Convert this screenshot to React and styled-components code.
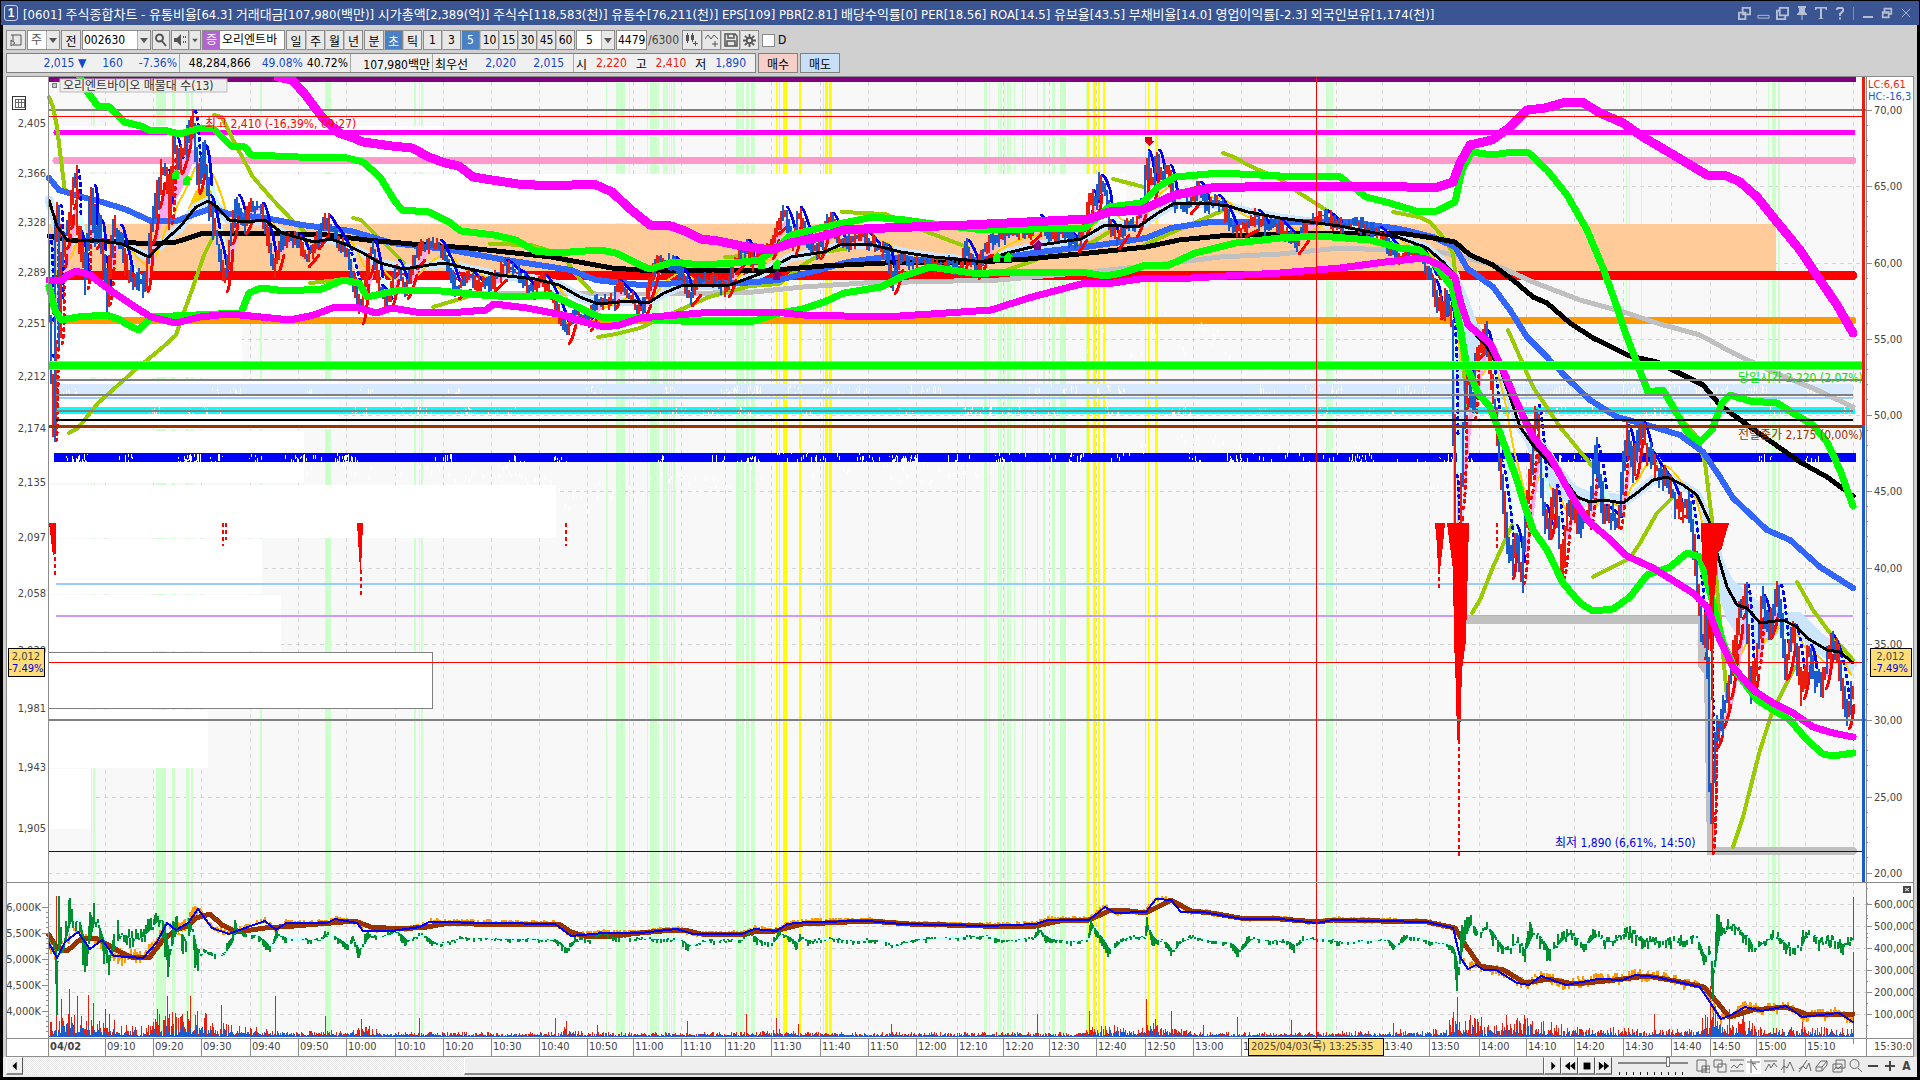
import React, { useState } from 'react';
import styled, { createGlobalStyle } from 'styled-components';

const GlobalStyle = createGlobalStyle`
    * {
        box-sizing: border-box;
    }

    body {
        margin: 0;
        background: #000;
    }

    body, button, input, select {
        font-family: "Liberation Sans Narrow", "DejaVu Sans Condensed", "Noto Sans CJK KR", sans-serif;
        font-size: 12px;
    }
`

const Screen = styled.div`
    min-height: 100vh;
    padding-top: 1px;
    display: flex;
    flex-direction: column;
`

const TitleBar = styled.header`
    height: 24px;
    margin: 0 1px;
    padding: 0 6px 0 3px;
    background: #3a5591;
    color: #fff;
    display: flex;
    align-items: center;
    justify-content: space-between;
`

const TitleText = styled.h1`
    display: flex;
    align-items: center;
    gap: 5px;
    margin: 0;
    font-size: 13px;
    font-weight: normal;
    white-space: pre;
`

const Badge = styled.span`
    width: 14px;
    height: 16px;
    border: 1px solid #c8d2e8;
    border-radius: 3px;
    font: bold 12px/14px "Liberation Sans", sans-serif;
    text-align: center;
`

const TitleIcons = styled.div`
    display: flex;
    align-items: center;
    gap: 4px;
`

const IconButton = styled.button`
    width: ${p => p.$w || 15}px;
    height: 16px;
    padding: 0;
    border: 0;
    background: ${p => p.$on ? '#fff' : 'none'};
    color: ${p => p.$color || '#b4bfd6'};
    display: flex;
    align-items: center;
    justify-content: center;
`

const TitleLine = styled.i`
    width: 1px;
    height: 13px;
    margin: 0 2px;
    background: #7d8fb8;
`

const Body = styled.main`
    flex: 1;
    margin: 0 3px 3px;
    padding: 5px 3px 0;
    background: #d0d0d0;
    display: flex;
    flex-direction: column;
`

const Toolbar = styled.div`
    height: 20px;
    display: flex;
    align-items: center;
    gap: 1px;
`

const Tool = styled.button`
    width: ${p => p.$w || 19}px;
    height: 20px;
    padding: 0;
    border: 1px solid #8c8c8c;
    border-left-color: ${p => p.$joined ? '#c0c0c0' : '#8c8c8c'};
    margin-left: ${p => p.$joined ? -1 : 0}px;
    background: ${p => p.$on ? '#4a80c4' : '#e8e8e8'};
    color: ${p => p.$on ? '#fff' : '#000'};
    display: flex;
    align-items: center;
    justify-content: center;

    svg {
        color: #555;
    }
`

const Combo = styled.label`
    width: ${p => p.$w}px;
    height: 20px;
    border: 1px solid #8c8c8c;
    background: #fff;
    display: flex;
    align-items: stretch;
`

const ComboSelect = styled.select`
    appearance: none;
    flex: 1;
    min-width: 0;
    padding: 0 3px;
    border: 0;
    background: transparent;
    color: ${p => p.$color || '#000'};
`

const ComboInput = styled.input`
    flex: 1;
    min-width: 0;
    padding: 0 0 0 1px;
    border: 0;
    background: transparent;
    text-align: ${p => p.$center ? 'center' : 'left'};
`

const Arrow = styled.span`
    width: 13px;
    border-left: 1px solid #b0b0b0;
    background: #e8e8e8;
    display: flex;
    align-items: center;
    justify-content: center;

    &::after {
        content: "";
        border: 4px solid transparent;
        border-top: 5px solid #555;
        border-bottom: 0;
    }
`

const Mark = styled.span`
    flex: none;
    width: 17px;
    height: 18px;
    background: #b565d0;
    color: #fff;
    line-height: 18px;
    text-align: center;
`

const StockName = styled.div`
    width: 83px;
    height: 20px;
    border: 1px solid #8c8c8c;
    background: #fff;
    display: flex;
    gap: 2px;
    overflow: hidden;
    line-height: 18px;
    white-space: nowrap;
`

const Check = styled.label`
    display: flex;
    align-items: center;
    gap: 3px;
    margin-left: 2px;

    input {
        appearance: none;
        width: 13px;
        height: 13px;
        margin: 0;
        border: 1px solid #888;
        background: #fff;
    }
`

const Muted = styled.span`
    width: 33px;
    color: #444;
`

const InfoRow = styled.div`
    height: 20px;
    margin: 3px 0;
    display: flex;
    gap: 2px;
`

const InfoBar = styled.div`
    width: 750px;
    border: 1px solid #808080;
    background: #f0f0f0;
    display: flex;
`

const InfoCell = styled.div`
    width: ${p => p.$w}px;
    padding: 0 2px;
    border-left: ${p => p.$first ? 0 : 1}px solid #a8a8a8;
    display: flex;
    align-items: center;
    justify-content: ${p => p.$spread ? 'space-between' : 'flex-end'};
    gap: ${p => p.$gap || 0}px;
    white-space: nowrap;
`

const Num = styled.span`
    color: ${p => p.$c || '#000'};
    margin-right: ${p => p.$push ? 'auto' : 0};
`

const Order = styled.button`
    width: 40px;
    padding: 0;
    border: 1px solid #808080;
    background: ${p => p.$bg};
`

const ChartFrame = styled.section`
    border: 1px solid #8c8c8c;
    background: #fff;
    line-height: 0;

    svg {
        display: block;
        width: 100%;
        height: auto;
    }
`

const Footer = styled.footer`
    flex: 1;
    min-height: 19px;
    margin: 0 -3px;
    padding: 0 3px 2px;
    background: #ececec;
    display: flex;
    align-items: stretch;
`

const ScrollTrack = styled.div`
    flex: 1;
    display: flex;
    background: repeating-conic-gradient(#fff 0 25%, #e4e4e4 0 50%) 0 0 / 2px 2px;
`

const ScrollThumb = styled.div`
    margin-left: 29%;
    flex: 1;
    border: 1px solid #fff;
    border-right-color: #666;
    border-bottom: 2px solid #888;
    background: #efefef;
`

const PlayButton = styled.button`
    width: 17px;
    padding: 0;
    border: 1px solid #fff;
    border-right-color: #555;
    border-bottom: 2px solid #888;
    background: #efefef;
    display: flex;
    align-items: center;
    justify-content: center;
`

const Speed = styled.div`
    width: 70px;
    margin: 0 7px 0 6px;
    display: flex;
    flex-direction: column;
    justify-content: space-between;

    input {
        appearance: none;
        width: 100%;
        height: 10px;
        margin: 0;
        background: linear-gradient(#888, #888) 0 5px / 100% 2px no-repeat;
    }

    input::-webkit-slider-thumb {
        appearance: none;
        width: 4px;
        height: 10px;
        border: 1px solid #777;
        background: #fff;
    }
`

const SpeedTicks = styled.div`
    height: 3px;
    margin: 0 1px;
    background: repeating-linear-gradient(90deg, #222 0 1px, transparent 1px 7px);
`

const FooterIcons = styled.div`
    display: flex;
    align-items: center;
    gap: 2px;
`

const Tiny = ({ d, fill, size = 14, w = 1 }) => (
    <svg width={size} height={size} viewBox="0 0 14 14" fill={fill ? 'currentColor' : 'none'} stroke={fill ? 'none' : 'currentColor'} strokeWidth={w} aria-hidden="true">
        <path d={d} />
    </svg>
)

// "x,y x,y" -> [[x, y], ...]
const pts = s => s.trim().split(/\s+/).map(p => p.split(',').map(Number));

// small seeded generator, keeps the bars the same on every render
const seeded = seed => () => {
    seed = (seed * 16807) % 2147483647;
    return seed / 2147483647;
}

const at = (line, x) => {
    if (x <= line[0][0]) return line[0][1];
    for (let i = 1; i < line.length; i++) {
        const [x0, y0] = line[i - 1];
        const [x1, y1] = line[i];
        if (x <= x1) return x1 === x0 ? y1 : y0 + (y1 - y0) * (x - x0) / (x1 - x0);
    }
    return line[line.length - 1][1];
}

const price = pts(`49,240 52,360 55,432 57,230 60,210 61,335 63,260 66,240 70,220 73,200 77,175 79,235 82,245 86,268 87,280 90,212 94,190 96,240 101,225 104,260 109,296
114,230 120,230 125,250 131,280 147,283 152,235 158,200 164,168 168,175 171,215 175,140 181,165 190,130 194,116 199,185 205,150 210,200 218,240 226,283 232,235 238,200 245,225 252,205 262,208 268,230 275,270 283,240 300,240 308,258 318,240 328,220 335,230 350,258 362,315 368,270
374,245 381,290 390,302 398,265 407,290 416,260 424,245 440,245 448,260 458,290 470,275 482,285 494,282 506,265 520,275 533,290 545,280 556,300 568,335 575,310 590,322 597,300 605,300 615,300 618,285 630,295 640,310
643,310 650,290 658,258 665,262 675,262 684,275 691,297 700,280 720,282 728,288 735,265 748,245 752,262 760,255 772,250 778,225 786,212 795,245 800,212 810,245 820,250 827,225 832,218 843,245 855,240 865,235 878,248 888,250 894,285 902,255 910,262 925,262 935,265 950,262 962,268 967,245 978,270 985,250 992,240 1005,235 1020,230 1030,235 1040,220 1050,235 1065,232 1078,243 1086,225 1092,195 1097,205 1101,180 1107,190 1111,225 1118,240 1128,220 1136,228 1145,200 1148,155 1154,190 1158,155 1163,175 1170,170 1176,205 1190,205 1200,187 1208,205 1218,200 1226,210 1235,230 1245,228 1258,215 1268,228 1280,225
1298,245 1310,222 1325,215 1340,225 1360,225 1380,232 1400,258 1420,250 1435,285 1440,310 1448,300 1453,325 1456,480 1458,650 1462,500 1466,400 1470,370 1474,410 1478,350 1487,335 1492,370 1498,430 1502,470 1512,570 1516,530 1523,575 1530,490 1538,410 1545,510 1550,530 1556,490 1563,570 1570,500 1580,520 1590,520 1597,450 1605,510 1620,520 1628,430 1635,470 1642,425 1650,455 1660,470 1668,480 1680,510 1690,500 1697,560 1704,650 1708,600 1712,845 1716,740 1722,720 1730,690 1737,640 1742,610 1747,590 1752,690 1758,660 1763,600 1770,630 1780,590 1787,670 1795,630 1803,690 1810,650 1815,675 1825,680 1832,640 1840,660 1848,720 1853,690`);

const magentaTop = '278,77 292,80 304,93 322,117 339,133 351,137 363,142 392,146 412,148 429,157 445,163 459,166 473,177 492,180 518,184 551,186 594,184 612,192 629,208 640,217 650,225 671,226 685,231 701,239 718,241 742,246 771,250 791,243 820,237 844,230 885,228 967,225 1007,223 1089,219 1109,212 1142,210 1175,195 1211,188 1280,186 1378,186 1435,188 1453,182 1460,163 1470,145 1492,140 1509,128 1527,110 1545,108 1566,102 1582,102 1600,113 1623,123 1643,137 1677,157 1707,175 1727,176 1740,182 1757,197 1777,222 1800,250 1820,280 1837,305 1853,333';
const magentaLow = '49,280 61,281 68,275 76,271 90,275 110,290 135,307 151,317 176,323 200,317 229,314 261,317 290,320 314,315 335,307 359,308 376,313 392,308 416,312 461,312 486,310 494,304 527,308 563,315 584,322 604,327 620,325 640,318 701,313 775,312 803,315 885,317 946,313 991,310 1032,297 1085,283 1113,283 1146,278 1191,278 1280,273 1340,268 1385,262 1423,258 1440,265 1455,277 1460,300 1468,325 1490,343 1503,370 1517,403 1533,437 1550,457 1563,480 1570,493 1587,520 1607,537 1627,556 1653,568 1693,593 1707,607 1720,640 1733,667 1753,690 1773,703 1793,713 1813,727 1833,733 1853,737';
const greenTop = '80,77 88,93 98,106 110,107 124,122 141,126 151,131 163,130 180,134 200,128 214,129 231,146 245,147 251,155 298,157 347,158 363,162 380,177 394,200 402,210 429,212 449,222 461,231 494,235 516,240 535,251 555,253 600,250 616,253 640,265 650,269 673,262 701,265 734,263 760,260 777,248 791,235 824,227 873,217 905,220 926,223 983,230 1085,228 1109,207 1142,203 1158,187 1175,177 1220,173 1280,176 1339,176 1366,197 1386,202 1419,212 1437,211 1455,202 1462,170 1472,152 1492,155 1513,152 1529,153 1547,170 1567,195 1587,230 1603,268 1617,307 1627,337 1637,363 1648,392 1663,390 1675,410 1687,432 1700,442 1712,430 1722,403 1730,395 1750,401 1777,403 1793,413 1813,425 1827,442 1840,470 1853,506';
const greenLow = '49,287 55,310 61,320 78,317 106,315 118,319 132,327 139,330 151,317 196,315 241,313 249,293 261,288 286,291 322,289 343,280 359,283 367,297 400,290 441,291 482,295 514,297 551,295 567,302 584,310 600,317 640,318 681,321 754,321 779,313 803,309 824,302 844,293 881,287 901,277 930,267 979,274 999,272 1081,272 1105,276 1122,273 1146,265 1167,266 1195,253 1236,243 1280,238 1320,236 1370,240 1400,248 1420,250 1437,267 1452,287 1460,327 1467,367 1478,393 1490,407 1500,433 1517,480 1523,500 1533,530 1547,550 1563,583 1580,603 1593,611 1613,609 1630,597 1647,575 1670,567 1687,553 1700,557 1713,603 1723,643 1737,673 1757,700 1790,720 1807,740 1823,754 1833,756 1853,753';
const blueMa = '49,178 59,190 82,197 102,202 127,210 151,221 176,221 212,208 229,214 265,218 302,225 351,231 392,243 445,249 506,260 571,270 596,280 640,285 681,283 742,283 779,280 811,272 848,262 885,257 918,260 958,262 999,258 1048,251 1093,246 1146,238 1171,228 1211,222 1280,222 1350,222 1400,229 1433,237 1455,247 1467,268 1493,287 1510,310 1527,337 1543,353 1567,378 1590,400 1617,417 1647,425 1680,435 1703,452 1720,477 1733,498 1767,530 1790,540 1820,567 1853,588';
const blackThick = '49,236 67,240 106,241 151,244 176,242 204,233 237,234 265,233 327,235 367,240 412,244 469,248 551,257 612,268 640,270 775,270 824,266 885,263 979,262 1028,259 1089,253 1146,247 1179,240 1220,236 1280,234 1400,233 1433,238 1455,242 1470,255 1493,265 1513,280 1533,297 1547,303 1570,323 1593,338 1630,356 1657,362 1683,375 1703,385 1720,405 1750,427 1773,443 1800,462 1827,477 1853,496';
const blackThin = '49,200 57,226 67,240 98,240 122,244 149,257 163,242 180,227 196,207 208,201 216,206 229,220 245,222 265,220 282,233 314,242 331,239 347,245 363,253 380,263 404,269 429,265 445,263 465,268 498,275 535,279 559,285 580,297 598,304 629,301 648,303 664,293 681,286 730,285 762,273 791,257 824,252 840,245 869,244 901,252 934,257 967,260 983,262 1007,253 1040,245 1081,239 1105,225 1138,227 1158,213 1173,204 1203,203 1228,206 1248,212 1280,218 1340,226 1400,238 1427,248 1443,262 1455,275 1467,325 1487,347 1500,368 1510,397 1520,427 1533,445 1567,483 1577,497 1590,502 1603,500 1623,503 1637,493 1653,480 1667,477 1683,485 1697,495 1710,523 1717,553 1727,587 1737,605 1747,608 1760,623 1783,620 1797,627 1807,638 1827,650 1840,652 1853,663';
const grayMa = '461,293 596,294 673,294 754,292 803,287 864,283 999,280 1109,270 1171,263 1220,257 1280,254 1340,248 1440,252 1467,258 1500,267 1533,282 1580,300 1627,313 1660,324 1700,335 1733,353 1773,372 1817,390 1853,407';

const olive = [
    '49,97 53,107 57,127 61,160 65,192', '214,115 222,117 233,140 253,177 273,200 292,220 306,233', '69,433 78,428 98,403 135,370 163,347 176,335 180,323 192,290 204,255 214,235',
    '353,218 361,220 384,243 404,263', '310,283 339,280', '433,307 473,295', '490,244 531,245 563,255 576,275 592,292', '598,337 616,334 640,328 673,313 709,297 750,286 779,284 803,265 824,252 850,248',
    '842,212 885,214 922,230 967,247', '725,257 745,256', '1007,270 1073,247 1093,242 1109,232', '1113,179 1144,187', '1144,245 1171,233 1224,210', '1223,153 1234,157 1252,167 1280,179 1298,192 1329,212',
    '1393,212 1419,217 1430,222 1443,237 1453,253 1458,300 1462,345 1467,410', '1508,330 1533,387 1560,427 1593,467', '1472,613 1480,600 1493,567 1512,525', '1593,577 1630,558 1640,543 1657,513 1673,497',
    '1682,420 1697,437 1705,463 1712,520 1717,587 1727,697', '1797,582 1813,610 1833,637 1853,660', '1733,847 1743,817 1760,750 1773,710 1795,667',
];

const levels = [
    [56, 1853, 160, '#ff99cc', 7], [56, 1853, 132, '#ff00ff', 5], [54, 1853, 275, '#ff0000', 9], [52, 1853, 320, '#ff9900', 7],
];

const bands = [
    [156, 10], [172, 3], [186, 3], [191, 2], [91, 1], [93, 2], [260, 2], [325, 6], [414, 2], [419, 1], [421, 2], [606, 1], [616, 3], [620, 5], [629, 1],
    [647, 1], [650, 2], [652, 5], [658, 1], [663, 2], [666, 2], [669, 1], [671, 1], [673, 2], [736, 3], [740, 1], [742, 2], [746, 3], [751, 4], [965, 1], [984, 3], [989, 1], [998, 1], [1000, 2], [1004, 1], [1007, 2], [1010, 1], [1014, 1], [1022, 1], [1025, 1],
    [1037, 1], [1043, 2], [1052, 3], [1060, 6], [1086, 1], [1326, 3], [1330, 1], [1332, 1], [1626, 1], [1629, 1], [1641, 1], [1768, 1], [1772, 4], [1778, 2],
];
const yellowBands = [[776, 1], [779, 1], [783, 2], [786, 1], [799, 2], [823, 1], [825, 3], [829, 3], [1087, 2], [1093, 3], [1098, 2], [1103, 2], [1145, 1], [1148, 1], [1155, 3]];

// volume by price, newest block is outlined
const profile = [[126, 46, 443], [174, 49, 1126], [273, 48, 640], [324, 53, 242], [379, 50, 339], [431, 52, 304], [485, 53, 556], [539, 55, 262], [595, 56, 281], [710, 58, 208], [769, 60, 91]];

const hours = [[105, '09:10'], [153, '09:20'], [201, '09:30'], [250, '09:40'], [298, '09:50'], [346, '10:00'], [395, '10:10'], [443, '10:20'], [491, '10:30'], [539, '10:40'], [587, '10:50'], [633, '11:00'], [681, '11:10'], [725, '11:20'], [771, '11:30'], [820, '11:40'], [868, '11:50'], [916, '12:00'], [957, '12:10'], [1003, '12:20'], [1049, '12:30'], [1096, '12:40'], [1145, '12:50'], [1193, '13:00'], [1241, '13:10'], [1289, '13:20'], [1336, '13:30'], [1382, '13:40'], [1429, '13:50'], [1479, '14:00'], [1526, '14:10'], [1574, '14:20'], [1623, '14:30'], [1671, '14:40'], [1710, '14:50'], [1756, '15:00'], [1805, '15:10']];
const leftScale = [[122, '2,405'], [172, '2,366'], [221, '2,328'], [271, '2,289'], [322, '2,251'], [375, '2,212'], [427, '2,174'], [481, '2,135'], [536, '2,097'], [592, '2,058'], [649, '2,020'], [707, '1,981'], [766, '1,943'], [827, '1,905']];
const rightScale = [[110, '70,00'], [186, '65,00'], [263, '60,00'], [339, '55,00'], [415, '50,00'], [491, '45,00'], [568, '40,00'], [644, '35,00'], [720, '30,00'], [797, '25,00'], [873, '20,00']];
const subLeft = [[907, '6,000K'], [933, '5,500K'], [959, '5,000K'], [985, '4,500K'], [1011, '4,000K']];
const subRight = [[904, '600,000'], [926, '500,000'], [948, '400,000'], [970, '300,000'], [992, '200,000'], [1014, '100,000']];

const brownObv = '49,935 57,948 67,951 82,938 96,938 110,946 122,953 131,957 149,958 163,940 176,930 188,926 196,918 210,914 222,925 237,932 265,928 294,926 355,921 371,927 400,929 427,927 449,923 498,925 559,924 571,932 588,937 612,936 640,933 673,930 685,930 701,934 742,935 758,931 775,931 803,924 869,921 909,924 983,926 1036,926 1064,920 1089,920 1109,911 1122,910 1146,913 1171,900 1191,911 1211,913 1240,918 1280,919 1317,922 1333,920 1427,922 1455,928 1464,943 1480,966 1504,970 1525,983 1549,979 1574,984 1615,980 1647,976 1676,981 1704,987 1717,1002 1729,1017 1753,1010 1786,1007 1806,1014 1853,1014';
const blueObv = '49,943 57,958 65,942 78,932 90,949 102,940 114,956 143,958 157,942 167,923 176,930 188,923 198,909 212,928 229,934 245,928 265,921 276,930 286,923 327,923 335,919 357,923 363,931 392,931 420,927 429,922 555,924 571,936 604,933 640,933 677,929 693,934 742,934 754,929 777,931 787,924 807,922 869,921 901,924 987,926 1036,924 1048,920 1089,920 1105,907 1115,913 1146,912 1156,899 1171,900 1181,912 1203,912 1242,919 1280,919 1317,923 1333,920 1427,922 1453,928 1460,957 1468,969 1476,965 1484,970 1496,970 1517,983 1529,985 1541,976 1566,985 1598,979 1623,980 1635,975 1656,977 1700,987 1713,1007 1721,1019 1731,1015 1745,1007 1762,1011 1786,1006 1802,1017 1839,1013 1853,1022';
// green oscillator: centre line with its larger swings
const swing = pts('49,940 55,945 57,1015 59,905 62,955 66,925 70,905 74,928 78,912 82,950 86,965 90,920 94,908 100,940 108,968 114,940 119,928 128,940 140,938 150,925 158,915 163,925 168,975 172,935 176,918 180,935 186,950 190,912 196,968 203,950 215,955 222,955 232,935 235,922 242,935 255,935 270,950 276,930 285,940 320,940 326,932 348,948 353,935 358,958 366,932 380,938 395,930 405,943 420,933 433,945 445,943 460,938 555,940 566,952 574,938 590,940 600,932 612,938 680,940 688,948 700,941 742,940 747,930 757,942 772,944 778,930 790,940 797,947 800,934 808,942 830,938 845,941 880,940 892,948 905,940 985,936 1000,941 1034,938 1039,926 1045,940 1075,942 1088,938 1091,915 1096,935 1103,945 1108,955 1118,940 1128,936 1145,938 1147,915 1152,945 1162,940 1172,955 1178,940 1190,936 1205,941 1230,943 1238,955 1248,936 1265,942 1285,940 1294,949 1302,938 1330,940 1340,943 1387,939 1393,950 1405,935 1430,943 1446,944 1453,950 1458,990 1461,930 1470,915 1476,938 1486,925 1497,945 1505,955 1515,938 1525,955 1530,927 1537,935 1548,955 1560,938 1568,932 1582,948 1595,933 1605,945 1625,930 1645,943 1662,940 1680,942 1695,935 1703,965 1710,950 1713,1000 1717,912 1722,930 1730,922 1740,935 1748,940 1752,955 1762,940 1775,935 1786,949 1800,948 1805,928 1820,945 1828,938 1845,948 1851,935 1853,940');
// bar height above which the volume stays, by x
const volumeBase = pts('49,20 60,26 90,24 120,14 150,12 160,24 200,26 220,16 250,9 285,8 300,5 350,7 365,12 380,5 550,4 570,12 585,4 740,4 780,7 800,4 1080,4 1090,14 1110,14 1130,7 1143,8 1150,22 1165,10 1190,6 1280,3 1440,8 1452,20 1460,32 1475,22 1500,14 1520,22 1560,12 1600,6 1620,11 1650,7 1695,8 1703,22 1712,36 1725,14 1745,18 1760,10 1853,9');
const spikes = { 56: 141, 61: 38, 69: 48, 77: 41, 88: 42, 93: 34, 105: 28, 109: 23, 157: 28, 167: 41, 190: 41, 221: 32, 275: 41, 325: 21, 361: 18, 419: 19, 555: 19, 566: 16, 597: 12, 687: 16, 746: 23, 776: 19, 798: 13, 891: 13, 1037: 23, 1089: 26, 1146: 38, 1171: 26, 1203: 12, 1237: 20, 1291: 17, 1393: 14, 1453: 25, 1457: 40, 1506: 22, 1654: 23, 1710: 51, 1729: 28, 1743: 22, 1802: 18, 1853: 85 };

const buildCandles = () => {
    const rand = seeded(77);
    let red = '';
    let blue = '';
    for (let x = 49; x < 1854; x += 2) {
        const y0 = at(price, x);
        const y1 = at(price, x + 2);
        const calm = x > 215 && x < 1430 ? 1 : 1.7;
        const top = Math.round(Math.min(y0, y1) - rand() * 9 * calm);
        const bottom = Math.round(Math.max(y0, y1) + rand() * 11 * calm);
        const seg = `M${x} ${top}V${bottom}`;
        if (rand() < (y1 < y0 ? 0.62 : 0.36)) red += seg;
        else blue += seg;
    }
    return { red, blue };
}

// trailing stops: over the price while it falls, under it while it rises
// gentle moves are a solid stroke, steep ones break up into dots
const buildTrail = () => {
    const out = { red: '', redDots: '', blue: '', blueDots: '' };
    for (let i = 1; i < price.length; i++) {
        const [x0, y0] = price[i - 1];
        const [x1, y1] = price[i];
        const move = Math.abs(y1 - y0);
        if (move < 9) continue;
        const dots = move > 50 ? 'Dots' : '';
        if (y1 > y0) out['blue' + dots] += `M${x0 + 1} ${y0 - 5}Q${x0 + 4} ${y0 - 5} ${x1 + 2} ${y0 + (y1 - y0) * 0.7}`;
        else out['red' + dots] += `M${x0 + 1} ${y0 + 9}Q${x0 + 4} ${y0 + 6} ${x1 + 1} ${y1 + 15}`;
    }
    return out;
}

const buildCloud = () => {
    let avg = at(price, 49);
    let slow = avg;
    let pink = '';
    let cyan = '';
    let yellow = 'M49 ' + avg;
    for (let x = 50; x < 1853; x++) {
        const y = at(price, x);
        const next = avg + (y - avg) * 0.16;
        const seg = `M${x - 1} ${avg.toFixed(1)}L${x} ${next.toFixed(1)}`;
        if (next < avg) pink += seg;
        else cyan += seg;
        avg = next;
        slow += (y - slow) * 0.045;
        yellow += `L${x} ${slow.toFixed(1)}`;
    }
    return { pink, cyan, yellow };
}

const buildSpecks = () => {
    const rand = seeded(411);
    let d = '';
    const rows = [[454, 8], [385, 9], [407, 7]];
    rows.forEach(([top, h]) => {
        for (let c = 0; c < 46; c++) {
            const cx = 60 + rand() * 1780;
            for (let i = 0; i < 7; i++) {
                const x = Math.round(cx + rand() * 16);
                const y = Math.round(top + rand() * h);
                d += `M${x} ${y}v${Math.round(1 + rand() * (top + h - y))}`;
            }
        }
    });
    // faint echoes of the price below the levels
    for (let x = 245; x < 1453; x += 2) {
        const y = at(price, x);
        if (rand() < 0.45) d += `M${x} ${Math.round(430 + (y - 200) * 0.5 + rand() * 20)}v4`;
        if (rand() < 0.3 && y < 235) d += `M${x} ${Math.round(y + 128 + rand() * 26)}v4`;
    }
    return d;
}

const buildVolume = () => {
    const rand = seeded(9);
    let red = '';
    let blue = '';
    for (let x = 49; x < 1854; x++) {
        const base = at(volumeBase, x);
        const r = Math.round(1 + base * Math.pow(rand(), 1.8));
        red += `M${x} 1037v-${spikes[x] || r}`;
        blue += `M${x} 1037v-${Math.round(1 + base * 0.5 * Math.pow(rand(), 2))}`;
    }
    return { red, blue };
}

const buildSwing = () => {
    const rand = seeded(52);
    let green = '';
    let orange = '';
    let smooth = 'M49 940';
    let avg = 940;
    const line = pts(blueObv);
    for (let x = 49; x < 1853; x++) {
        const wild = x < 200 ? 12 : x > 1453 ? 8 : 3;
        const y = at(swing, x);
        avg += (y - avg) * 0.18;
        smooth += `L${x} ${avg.toFixed(1)}`;
        if (rand() < (Math.abs(y - avg) > 2 ? 0.9 : 0.5)) green += `M${x} ${avg.toFixed(0)}L${x} ${(y + (rand() - 0.5) * wild * 2 + 1).toFixed(0)}`;
        const o = at(line, x);
        if (rand() < 0.5) orange += `M${x} ${(o - rand() * wild * 0.6 - 2).toFixed(0)}v${(3 + rand() * wild * 0.8).toFixed(0)}`;
    }
    return { green, orange, smooth };
}

const candles = buildCandles();
const trail = buildTrail();
const cloud = buildCloud();
const specks = buildSpecks();
const volume = buildVolume();
const osc = buildSwing();

const Line = ({ points, color, w }) => (
    <polyline points={points} fill="none" stroke={color} strokeWidth={w} strokeLinecap="round" strokeLinejoin="round" />
)

const Rule = ({ x1 = 48, x2 = 1862, y, h = 1, color }) => <rect x={x1} y={y} width={x2 - x1} height={h} fill={color} />

const Pointer = ({ x, y, color, down }) => (
    <path d={down ? `M${x - 3} ${y - 4}h7v4h2l-5 5l-5 -5h1z` : `M${x - 3} ${y + 5}h7v-5h2l-5 -5l-5 5h1z`} fill={color} />
)

const Grid = () => (
    <g stroke="#d3d3d3" strokeDasharray="4 4">
        {hours.map(([x]) => <path key={x} d={`M${x}.5 82V1038`} />)}
        <path d="M1853.5 82V1038" />
        {rightScale.map(([y]) => <path key={y} d={`M48 ${y}.5H1862`} />)}
        {subRight.map(([y]) => <path key={y} d={`M48 ${y}.5H1866`} />)}
    </g>
)

const PricePane = () => (
    <g>
        {profile.map(([y, h, x]) => <rect key={y} x="48" y={y} width={x - 48} height={h} fill="#fff" />)}
        <rect x="48" y="224" width="1728" height="47" fill="#ffcc99" />
        <rect x="48.5" y="652.5" width="384" height="56" fill="#fff" stroke="#808080" />
        {levels.map(([x1, x2, y, c, w]) => <path key={y} d={`M${x1} ${y}.5H${x2}`} stroke={c} strokeWidth={w} strokeLinecap="round" />)}
        <Rule y={77} x2={1856} h={5} color="#800080" />
        <Rule y={109} x2={1866} h={2} color="#808080" />
        <Rule y={384} x1={56} x2={1853} h={11} color="#d6e9ff" />
        <Rule y={397} x1={56} x2={1853} h={2} color="#99ccff" />
        <Rule y={407} x1={56} x2={1855} h={7} color="#00ffff" />
        <Rule y={453} x1={54} x2={1856} h={9} color="#0000ff" />
        <path d={specks} stroke="#fff" strokeWidth="1" />
        <Rule y={583} x1={56} x2={1853} h={2} color="#99ccff" />
        <Rule y={615} x1={56} x2={1853} h={2} color="#cc99ff" />
        <path d="M1454 370V604M1458 370L1459 600" stroke="#c0c0c0" strokeWidth="3" />
        <path d="M1468 620H1702V665L1708 672L1711 851H1853" fill="none" stroke="#c0c0c0" strokeWidth="8" strokeLinecap="round" />
        <path d="M1458 275L1465 290L1478 325L1493 340L1505 365L1515 410L1527 430L1545 440L1560 465L1575 485L1590 492L1625 494V504L1590 507L1570 505L1550 490L1530 455L1510 400L1490 360L1470 380L1464 520L1459 600Z" fill="#cce5ff" />
        <path d="M1697 488L1712 530L1717 548L1733 580L1757 600L1780 612L1800 612L1820 632L1853 655V675L1815 652L1797 635L1783 630L1760 650L1740 640L1727 620L1717 590Z" fill="#cce5ff" />
        <path d="M174 237L184 218L196 190L206 186L214 194L226 214L214 206L200 204L184 226Z" fill="#ffcc00" />
        <path d="M159 225L166 190L174 175L190 150L197 150L186 182L176 200L168 216Z" fill="#ffaaee" />
        <Line points={grayMa} color="#c0c0c0" w={5} />
        <Line points={blackThin} color="#cce5ff" w={9} />
        <path d={cloud.yellow} fill="none" stroke="#ffcc00" strokeWidth="2" />
        <path d={cloud.pink} stroke="#ffaaee" strokeWidth="4" />
        <path d={cloud.cyan} stroke="#ccffff" strokeWidth="4" />
        {olive.map(p => <Line key={p} points={p} color="#99cc00" w={4} />)}
        <Line points={blueMa} color="#3366ff" w={6} />
        <Line points={blackThick} color="#000" w={5} />
        <g fill="none" strokeWidth="3" strokeLinecap="round">
            <path d={trail.blue} stroke="#0000ff" />
            <path d={trail.red} stroke="#ff0000" />
            <path d={trail.blueDots} stroke="#0000ff" strokeDasharray="2 5" />
            <path d={trail.redDots} stroke="#ff0000" strokeDasharray="2 5" />
        </g>
        <path d={candles.blue} stroke="#1a5ccc" strokeWidth="2" />
        <path d={candles.red} stroke="#e81e0e" strokeWidth="2" />
        <Line points={blackThin} color="#000" w={3} />
        <Line points={greenTop} color="#00ff00" w={7} />
        <Line points={greenLow} color="#00ff00" w={7} />
        <g fill="#ff0000">
            <path d="M1435 523H1445L1443 545L1440 570H1438L1437 545Z" />
            <path d="M1447 523H1469L1467 600L1466 640L1462 670L1460 740H1457L1456 690L1454 640L1453 570Z" />
            <path d="M1701 523H1729L1724 540L1722 548L1718 552L1717 570L1714 600L1713 700H1711L1710 600L1707 570L1702 560Z" />
            <path d="M49 523H56V550L53 556Z" />
            <path d="M357 523H363L361 570H360Z" />
        </g>
        <path d="M1458.5 740V858M1439 570V590M54.5 550V578M360.5 570V597M223 523V546M226 523V540M565.5 523V546M1496.5 523V550M1718 720L1715 830" stroke="#ff0000" strokeWidth="2" strokeDasharray="4 3" />
        <path d="M56.5 340V432M1712.5 600V851" stroke="#e81e0e" />
        <Line points={magentaTop} color="#ff00ff" w={9} />
        <Line points={magentaLow} color="#ff00ff" w={7} />
        <Rule y={361} h={9} color="#c0c0c0" />
        <Rule y={362} h={7} color="#00ff00" />
        <Rule y={379} x1={56} x2={1862} h={2} color="#808080" />
        <Rule y={394} x1={56} x2={1853} h={2} color="#808080" />
        <Rule y={410} x1={56} x2={1853} h={2} color="#808080" />
        <Rule y={419} x1={56} x2={1853} h={2} color="#000" />
        <Rule y={425} h={3} color="#993300" />
        <Rule y={116} color="#ff0000" />
        <Rule y={719} x2={1866} h={2} color="#808080" />
        <Rule y={851} color="#0000d8" />
        <Pointer x={1148} y={141} color="#d8001e" down />
        <Pointer x={175} y={174} color="#00ff00" />
        <Pointer x={186} y={180} color="#00ff00" />
        <Pointer x={761} y={264} color="#00ff00" />
        <Pointer x={776} y={264} color="#00ff00" />
        <Pointer x={996} y={257} color="#00ff00" />
        <Pointer x={1007} y={257} color="#00ff00" />
        <Pointer x={776} y={275} color="#800080" />
        <Pointer x={1037} y={245} color="#800080" />
    </g>
)

const VolumePane = () => (
    <g fill="none">
        <path d={volume.red} stroke="#e81e0e" strokeWidth="1" transform="translate(.5 0)" />
        <path d={volume.blue} stroke="#1a5ccc" strokeWidth="1" transform="translate(.5 0)" />
        <path d={osc.orange} stroke="#ff9900" strokeWidth="2" />
        <path d={osc.smooth} stroke="#ccffff" strokeWidth="3" />
        <Line points={brownObv} color="#993300" w={5} />
        <path d={osc.green} stroke="#009030" strokeWidth="2" />
        <Line points={blueObv} color="#0000ff" w={2} />
        <path d="M1853.5 897V940" stroke="#009030" />
    </g>
)

const PriceTag = ({ x, w }) => (
    <g textAnchor="middle">
        <rect x={x + 0.5} y="648.5" width={w} height="28" fill="#ffdd77" stroke="#000" />
        <text x={x + w / 2} y="660" fill="#444">2,012</text>
        <text x={x + w / 2} y="672" fill="#0000e0">-7.49%</text>
    </g>
)

const Chart = () => (
    <svg viewBox="7 77 1906 979" fontFamily='"Liberation Sans Narrow", "DejaVu Sans Condensed", "Noto Sans CJK KR", sans-serif' fontSize="11" fill="#444" role="img" aria-label="오리엔트바이오 차트">
        <g shapeRendering="crispEdges">
            <rect x="48" y="77" width="1818" height="961" fill="#f8f8f8" />
            <Grid />
            {bands.map(([x, w]) => <rect key={x} x={x} y="82" width={w} height="956" fill="#ccffcc" />)}
            {yellowBands.map(([x, w]) => <rect key={x} x={x} y="82" width={w} height="956" fill="#ffff00" />)}
            <PricePane />
            <VolumePane />
            <Rule y={662} color="#ff0000" />
            <rect x="1316" y="77" width="1" height="961" fill="#ff0000" />
            <rect x="1862" y="77" width="3" height="349" fill="#e81e0e" />
            <rect x="1862" y="426" width="3" height="456" fill="#1a5ccc" />
            <g stroke="#8c8c8c">
                <path d="M48.5 77V1056M1866.5 77V1056M7 882.5H1913M7 1038.5H1913" />
                {hours.map(([x]) => <path key={x} d={`M${x}.5 1038V1056`} />)}
                <path d="M1853.5 1038V1044" />
                {rightScale.map(([y]) => <path key={y} d={`M1866 ${y}.5h6m-6 15h2m-2 15h2m-2 15h2m-2 15h2`} />)}
                {subRight.map(([y]) => <path key={y} d={`M1866 ${y}.5h6m-6 11h2`} />)}
                {subLeft.map(([y]) => <path key={y} d={`M48 ${y}.5h-6m6 5h-2m2 5h-2m2 5h-2m2 5h-2`} />)}
            </g>
        </g>
        <g textAnchor="end">
            {leftScale.map(([y, t]) => <text key={t} x="46" y={y + 5}>{t}</text>)}
            {subLeft.map(([y, t]) => <text key={t} x="41" y={y + 4}>{t}</text>)}
        </g>
        {rightScale.map(([y, t]) => <text key={t} x="1874" y={y + 4}>{t}</text>)}
        {subRight.map(([y, t]) => <text key={t} x="1874" y={y + 4}>{t}</text>)}
        {hours.filter(([x]) => x < 1241 || x > 1336).map(([x, t]) => <text key={t} x={x + 2} y="1050">{t}</text>)}
        <text x="50" y="1050" fontWeight="bold">04/02</text>
        <text x="1243" y="1050">1</text>
        <text x="1874" y="1050">15:30:0</text>
        <rect x="1248.5" y="1038.5" width="135" height="17" fill="#ffdd77" stroke="#000" />
        <text x="1251" y="1050">2025/04/03(목) 13:25:35</text>
        <text x="1868" y="88" fill="#e81e0e">LC:6,61</text>
        <text x="1868" y="100" fill="#1a5ccc">HC:-16,3</text>
        <g fontSize="12">
            <text x="205" y="128" fill="#ff0000">최고 2,410 (-16,39%, 09:27)</text>
            <text x="1738" y="382" fill="#00e000">당일시가 2,220 (2,07%)</text>
            <text x="1738" y="439" fill="#993300">전일종가 2,175 (0,00%)</text>
            <text x="1555" y="847" fill="#0000e0">최저 1,890 (6,61%, 14:50)</text>
        </g>
        <PriceTag x={8} w={36} />
        <PriceTag x={1870} w={41} />
        <rect x="52.5" y="83.5" width="4" height="4" fill="#ccc" stroke="#777" />
        <rect x="60" y="79" width="167" height="13" fill="#eee" stroke="#bbb" />
        <text x="63" y="90" fill="#333" fontSize="12">오리엔트바이오 매물대 수(13)</text>
        <g fill="#fff" stroke="#333" shapeRendering="crispEdges">
            <rect x="12.5" y="96.5" width="13" height="13" />
            <path d="M15 99h9v8h-9zM15 102h9M18 99v8M21 99v8" stroke="#666" />
        </g>
        <rect x="1903" y="886" width="8" height="7" fill="#444" />
        <path d="M1905 888l4 3m0 -3l-4 3" stroke="#fff" />
    </svg>
)

const periods = ['일', '주', '월', '년'];
const units = ['분', '초', '틱'];
const steps = ['1', '3', '5', '10', '15', '30', '45', '60'];
const title = '[0601] 주식종합차트 - 유통비율[64.3] 거래대금[107,980(백만)] 시가총액[2,389(억)] 주식수[118,583(천)] 유통수[76,211(천)] EPS[109] PBR[2.81] 배당수익률[0] PER[18.56] ROA[14.5] 유보율[43.5] 부채비율[14.0] 영업이익률[-2.3] 외국인보유[1,174(천)]';

const titleIcons = [
    ['새 창', 'M5 1h8v7h-8zM1 6h7v7h-7z', 2], ['숨기기', 'M1 9h12v3h-12z', 1], ['복제', 'M4 1h9v8h-9zM4 4h-3v9h9v-4', 2],
];

const footerIcons = [
    ['지역 추가', 'M1 1h9v11h-9zM6 7h8v7h-8zM10 7v7M6 10h8'], ['지역 복사', 'M1 1h8v7h-8zM5 5h8v8h-8z'], ['영역', 'M0 1h14M0 12h14M1 9l3-3 3 3 3-4 3 1'],
    ['십자선', 'M0 3h13M4 0v14M5 4l5 7M5 4l4 1'], ['추세', 'M0 2h13M1 12l4-7 2 4 3-5 3 4'], ['수직선', 'M3 0v14M0 11l3-4 3 2 3-6 4 9'],
    ['사선', 'M1 13l8-12M1 10l4-3 3 3 3-6 2 8'], ['전체 삭제', 'M1 8l5-6h6l-5 6zM1 8v4h6v-4M7 12l5-6v-4'], ['차트 겹침', 'M4 1h9v8h-9zM1 5h9v8h-9zM2 11l2-3 2 2 3-3'], ['확대', 'M1 5a4 4 0 1 0 9 0a4 4 0 1 0 -9 0M9 9l4 4'],
];

const App = () => {
    const [unit, setUnit] = useState('초');
    const [step, setStep] = useState('5');

    return (
        <Screen>
            <GlobalStyle />
            <TitleBar>
                <TitleText><Badge>1</Badge>{title}</TitleText>
                <TitleIcons>
                    {titleIcons.map(([name, d, w]) => <IconButton key={name} aria-label={name}><Tiny d={d} w={w} size={13} /></IconButton>)}
                    <IconButton aria-label="고정"><Tiny d="M3 0h8v2h-1v4l2 2v1h-4.500v5h-1v-5h-4.500v-1l2-2v-4h-1z" fill /></IconButton>
                    <IconButton aria-label="글꼴"><Tiny d="M1 1h12v3h-1l-1-1.500h-3v9.500l2 1h-6l2-1v-9.500h-3l-1 1.500h-1z" fill /></IconButton>
                    <IconButton aria-label="도움말"><Tiny d="M4 4v-1l1-1h4l1 1v2l-3 3v2M7 11.500v2" w={2} /></IconButton>
                    <TitleLine />
                    <IconButton aria-label="최소화"><Tiny d="M2 10h10v2h-10z" fill /></IconButton>
                    <IconButton aria-label="복원"><Tiny d="M4 5v-3h8v6h-2M2 6h7v6h-7zM2 7h7" w={2} size={12} /></IconButton>
                    <IconButton aria-label="닫기"><Tiny d="M2 2l10 10M12 2l-10 10" size={12} /></IconButton>
                </TitleIcons>
            </TitleBar>
            <Body>
                <Toolbar>
                    <Tool $w={20} aria-label="패널"><Tiny d="M2 2h10v10h-8M4 2v7M2 7l4 3-4 3z" /></Tool>
                    <Combo $w={33}><ComboSelect aria-label="구분" $color="#555"><option>주</option></ComboSelect><Arrow /></Combo>
                    <Tool $w={20}>전</Tool>
                    <Combo $w={69}><ComboInput aria-label="종목코드" defaultValue="002630" /><Arrow /></Combo>
                    <Tool $w={18} aria-label="검색"><Tiny d="M2 5a3.500 3.500 0 1 0 7 0a3.500 3.500 0 1 0 -7 0M8 8l4 5" w={2} /></Tool>
                    <Tool $w={18} aria-label="소리"><Tiny d="M1 5h3l4-4v12l-4-4h-3zM10 3h1v2h-1zM10 8h1v2h-1zM12 3h1v2h-1zM12 8h1v2h-1z" fill /></Tool>
                    <Tool $w={12} $joined aria-label="소리 설정"><Tiny d="M2 5h10l-5 6z" fill size={8} /></Tool>
                    <StockName><Mark>증</Mark>오리엔트바</StockName>
                    {periods.map((p, i) => <Tool key={p} $w={i ? 19 : 20} $joined={i > 0}>{p}</Tool>)}
                    {units.map((u, i) => <Tool key={u} $w={i ? 19 : 20} $joined={i > 0} $on={u === unit} onClick={() => setUnit(u)}>{u}</Tool>)}
                    {steps.map((s, i) => <Tool key={s} $w={19} $joined={i > 0} $on={s === step} onClick={() => setStep(s)}>{s}</Tool>)}
                    <Combo $w={39}><ComboInput aria-label="간격" defaultValue="5" $center /><Arrow /></Combo>
                    <Combo $w={31}><ComboInput aria-label="봉 수" defaultValue="4479" /></Combo>
                    <Muted>/6300</Muted>
                    <Tool $w={20} aria-label="봉 추가"><Tiny d="M1 2h3v6h-3zM2 0h1v10h-1zM6 2h3v5h-3zM7 0h1v9h-1zM10 8h1v2h2v1h-2v2h-1v-2h-2v-1h2z" fill /></Tool>
                    <Tool $w={19} $joined aria-label="지표 추가"><Tiny d="M0 6l3-4 3 4 3-4 4 4M10 8v6M7 11h6" /></Tool>
                    <Tool $w={19} $joined aria-label="저장"><Tiny d="M1 1h10l2 2v10h-12zM4 1v4h6v-4M3 13v-5h8v5" w={1.5} /></Tool>
                    <Tool $w={19} $joined aria-label="설정"><Tiny d="M4 7a3 3 0 1 0 6 0a3 3 0 1 0 -6 0M7 0v3M7 11v3M0 7h3M11 7h3M2 2l2 2M10 10l2 2M12 2l-2 2M4 10l-2 2" w={2} size={13} /></Tool>
                    <Check><input type="checkbox" />D</Check>
                </Toolbar>
                <InfoRow>
                    <InfoBar>
                        <InfoCell $w={172} $first $gap={16}><Num $c="#1448c8">2,015 ▼</Num><Num $c="#1448c8">160</Num><Num $c="#1448c8">-7.36%</Num></InfoCell>
                        <InfoCell $w={171} $gap={4}><Num $push>&nbsp;&nbsp;48,284,866</Num><Num $c="#1448c8">49.08%</Num><Num>40.72%</Num></InfoCell>
                        <InfoCell $w={82}>107,980백만</InfoCell>
                        <InfoCell $w={141} $spread><Num>최우선</Num><Num $c="#1448c8">2,020</Num><Num $c="#1448c8">2,015&nbsp;&nbsp;</Num></InfoCell>
                        <InfoCell $w={182} $spread><Num>시</Num><Num $c="#e81e0e">2,220</Num><Num>고</Num><Num $c="#e81e0e">2,410</Num><Num>저</Num><Num $c="#1448c8">1,890&nbsp;&nbsp;</Num></InfoCell>
                    </InfoBar>
                    <Order $bg="#f5cfc8">매수</Order>
                    <Order $bg="#c8dff5">매도</Order>
                </InfoRow>
                <ChartFrame>
                    <Chart />
                </ChartFrame>
                <Footer>
                    <PlayButton aria-label="왼쪽으로"><Tiny d="M9 2v10l-5-5z" fill size={12} /></PlayButton>
                    <ScrollTrack><ScrollThumb /></ScrollTrack>
                    <PlayButton aria-label="재생"><Tiny d="M5 2v10l5-5z" fill size={12} /></PlayButton>
                    <PlayButton aria-label="뒤로"><Tiny d="M7 2v10l-6-5zM13 2v10l-6-5z" fill size={12} /></PlayButton>
                    <PlayButton aria-label="정지"><Tiny d="M3 3h8v8h-8z" fill size={12} /></PlayButton>
                    <PlayButton aria-label="앞으로"><Tiny d="M1 2v10l6-5zM7 2v10l6-5z" fill size={12} /></PlayButton>
                    <Speed><input type="range" aria-label="속도" defaultValue="72" /><SpeedTicks /></Speed>
                    <FooterIcons>
                        {footerIcons.map(([name, d]) => <IconButton key={name} $color="#666" $on={name === '십자선'} aria-label={name}><Tiny d={d} /></IconButton>)}
                        <IconButton $color="#444" aria-label="축소"><Tiny d="M2 7h10" w={2} /></IconButton>
                        <IconButton $color="#444" aria-label="늘리기"><Tiny d="M2 7h10M7 2v10" w={2} /></IconButton>
                        <IconButton $color="#444" aria-label="자동"><b>A</b></IconButton>
                    </FooterIcons>
                </Footer>
            </Body>
        </Screen>
    )
}

export default App;
